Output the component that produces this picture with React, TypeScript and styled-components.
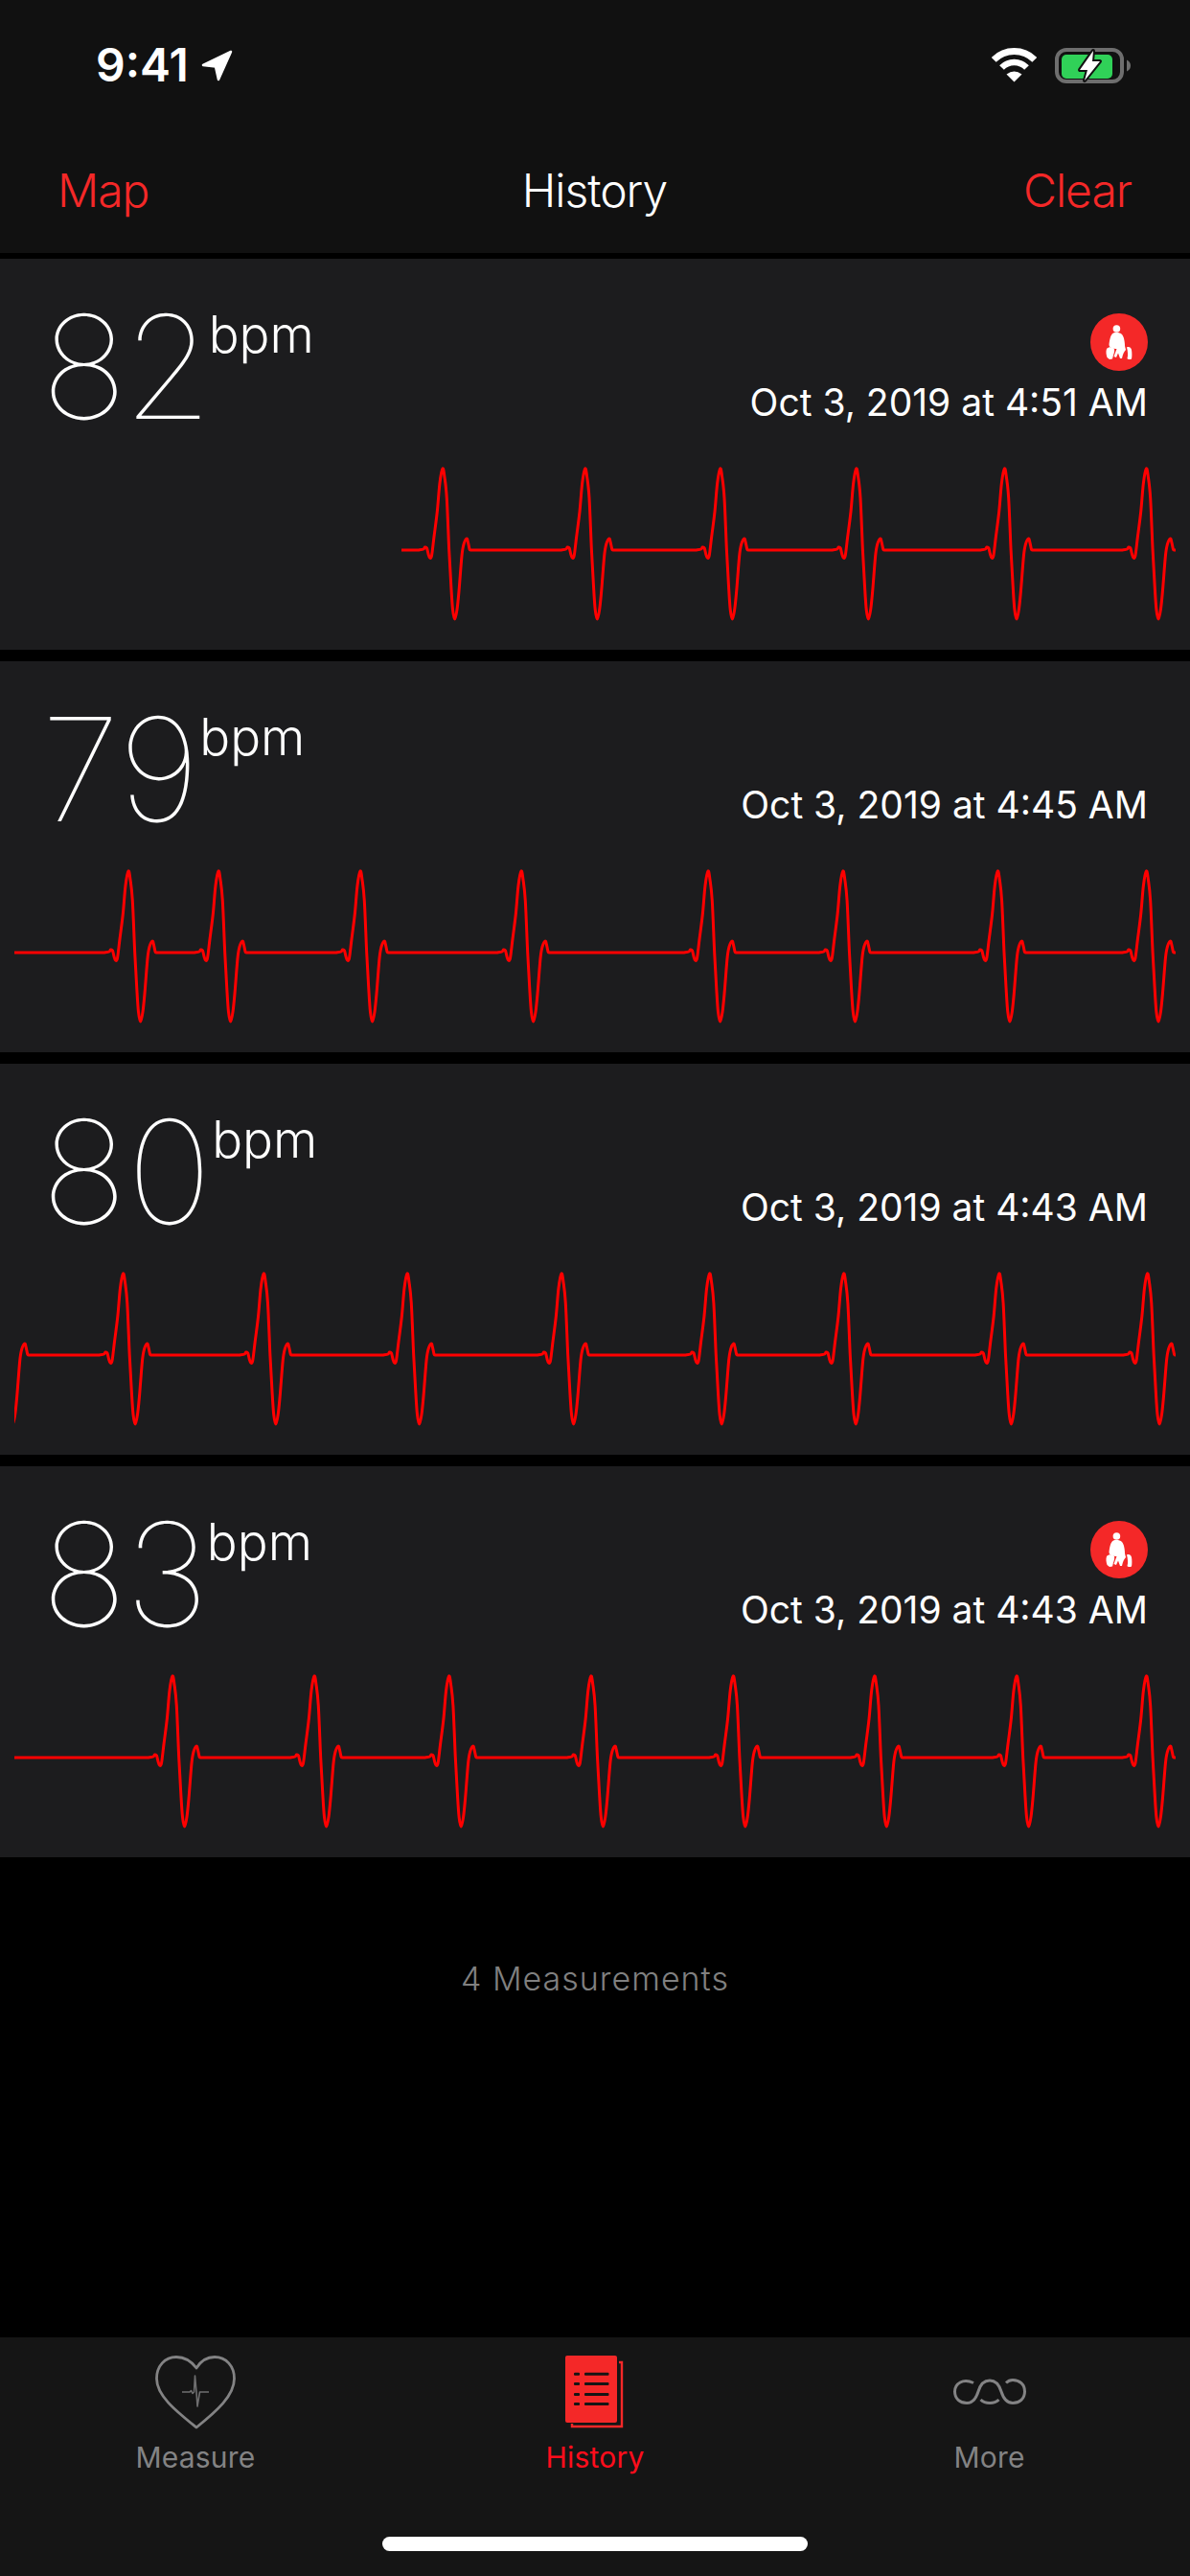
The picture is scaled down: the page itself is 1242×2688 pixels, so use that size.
import React from 'react';
import styled, { createGlobalStyle } from 'styled-components';

const Global = createGlobalStyle`
  html, body { margin: 0; padding: 0; background: #000; }
  * { box-sizing: border-box; }
`;

const FONT = `Inter, "Liberation Sans", sans-serif`;
const RED = '#f42828';
const GREY = '#838384';

const Page = styled.div`
  width: 1242px; height: 2688px; background: #000; display: flex; flex-direction: column;
  overflow: hidden; font-family: ${FONT}; color: #fff;
`;
const Header = styled.header`
  height: 264px; background: #111; margin-bottom: 6px; display: flex; flex-direction: column;
`;
const StatusBar = styled.div`
  height: 135px; padding: 49px 61px 0 100px; display: flex; justify-content: space-between; align-items: flex-start;
`;
const TimeWrap = styled.div`display: flex; align-items: center; gap: 13px; height: 38px;`;
const Time = styled.span`font-size: 48px; font-weight: 600; letter-spacing: 0; line-height: 38px;`;
const StatusIcons = styled.div`display: flex; align-items: flex-start; gap: 19px; padding-top: 1px;`;
const NavRow = styled.nav`
  display: grid; grid-template-columns: 1fr auto 1fr; align-items: center; padding: 0 61px 2px 60px; height: 128px;
  font-size: 48px; font-weight: 300; letter-spacing: -1px;
`;
const NavAction = styled.span<{ $end?: boolean }>`color: ${RED}; text-align: ${p => (p.$end ? 'right' : 'left')};`;
const NavTitle = styled.span``;

const List = styled.main`display: flex; flex-direction: column; gap: 12px;`;
const Card = styled.article`height: 408px; background: #1c1c1e; display: flex; flex-direction: column;`;
const CardTop = styled.div`
  height: 210px; display: flex; justify-content: space-between; padding: 0 44px 0 43px;
`;
const Reading = styled.div`display: flex; align-items: flex-start; padding-top: 39px;`;
const Bpm = styled.span<{ $tracking: number }>`
  font-size: 150px; font-weight: 100; line-height: 148px; letter-spacing: ${p => p.$tracking}px;
`;
const Unit = styled.span`font-size: 53px; font-weight: 300; line-height: 60px; margin-top: 10px;`;
const Meta = styled.div`
  display: flex; flex-direction: column; align-items: flex-end; padding: 57px 0 37px;
`;
const BadgeCircle = styled.div`
  width: 60px; height: 60px; border-radius: 50%; background: ${RED}; display: block;
`;
const DateText = styled.div`font-size: 39px; font-weight: 400; line-height: 46px; margin-top: auto; white-space: nowrap;`;
const Wave = styled.svg<{ $start: number }>`
  display: block; height: 175px; margin-left: ${p => p.$start}px; width: ${p => 1226.5 - p.$start}px; flex: none;
`;
const Footer = styled.div`
  height: 252px; display: flex; align-items: center; justify-content: center; font-size: 34px; font-weight: 300;
  letter-spacing: 1px; color: #808080;
`;
const TabBar = styled.footer`
  margin-top: auto; height: 249px; background: #151515; padding-top: 19px; display: flex; flex-direction: column;
`;
const Tabs = styled.div`
  display: grid; grid-template-columns: 408px 426px 397px; height: 124px;
`;
const Tab = styled.div<{ $active?: boolean }>`
  display: flex; flex-direction: column; align-items: center; height: 124px;
  color: ${p => (p.$active ? '#ff0d1c' : GREY)}; font-size: 30px; font-weight: 400;
`;
const TabIcon = styled.div`height: 91px; display: flex; align-items: flex-start; justify-content: center;`;
const MoreIconWrap = styled(TabIcon)`padding-top: 24px;`;
const TabLabel = styled.span`line-height: 36px; letter-spacing: 0.2px;`;
const Home = styled.div`
  width: 444px; height: 15px; border-radius: 8px; background: #fff; margin: 65px auto 0;
`;

const BEAT: [number, number][] = [
  [-25, 0], [-20, -1], [-18.5, -3], [-16.5, -2], [-15, 4], [-13.5, 8], [-11.5, 6], [-9, -14], [-5.7, -40], [-3, -70], [0, -85],
  [2, -76], [4.3, -54], [6.7, 0], [8.7, 36], [10.5, 62], [12.7, 72], [15, 62], [17, 43], [20, 6], [22, -6], [25, -12], [26.5, -8],
  [28, -1], [29, 0],
];
const BASE = 94;

function ecgPath(start: number, peaks: number[]) {
  let d = `M${start} ${BASE}`;
  for (const p of peaks) {
    const pts = BEAT.map(([x, y]) => [x + p, y + BASE]);
    d += ` L${pts[0][0]} ${pts[0][1]}`;
    for (let i = 0; i < pts.length - 1; i++) {
      const p0 = pts[Math.max(i - 1, 0)], p1 = pts[i], p2 = pts[i + 1], p3 = pts[Math.min(i + 2, pts.length - 1)];
      const c1 = [p1[0] + (p2[0] - p0[0]) / 6, p1[1] + (p2[1] - p0[1]) / 6];
      const c2 = [p2[0] - (p3[0] - p1[0]) / 6, p2[1] - (p3[1] - p1[1]) / 6];
      d += ` C${c1[0].toFixed(2)} ${c1[1].toFixed(2)} ${c2[0].toFixed(2)} ${c2[1].toFixed(2)} ${p2[0].toFixed(2)} ${p2[1].toFixed(2)}`;
    }
  }
  return d + ' L1240 ' + BASE;
}

const Ecg = ({ start, peaks }: { start: number; peaks: number[] }) => (
  <Wave $start={start} viewBox={`${start} 0 ${1226.5 - start} 175`}>
    <path d={ecgPath(start, peaks)} fill="none" stroke="#ff0000" strokeWidth={3} strokeLinejoin="round" />
  </Wave>
);

const Badge = () => (
  <BadgeCircle>
    <svg width="60" height="60" viewBox="0 0 60 60">
      <circle cx="27.4" cy="16" r="3.8" fill="#fff" />
      <path fill="#fff" d="M24 20.5C27 19.5 31 20 33 22C35 24 36 30 36 34L37 38L35.5 40C34 42 33.5 45 33 47L31 47L29 41.5L27 46L24.5 45L27.5 37C24 37 20 36 19.5 33C20 28 21 22 24 20.5Z" />
      <path fill="#fff" d="M17 37C19 34.5 23 34.5 25 37C25.5 40 24.5 42 24 43.5L23 47.5L20 48L17.5 46C16.5 43 16 40 17 37Z" />
      <path fill="#fff" d="M38 35.5C40 34.5 42.5 35.5 43 38C43.5 41 43.5 45 43 47.5C41 48.5 39 48 38.5 47C39.5 44 39 39 38 35.5Z" />
    </svg>
  </BadgeCircle>
);

const LocationArrow = () => (
  <svg width="33" height="33" viewBox="0 0 33 33">
    <path d="M31 2L2 16L15 17.5L18 31Z" fill="#fff" stroke="#fff" strokeWidth="2.5" strokeLinejoin="round" />
  </svg>
);
const Wifi = () => (
  <svg width="47" height="36" viewBox="0 0 47 36">
    <path d="M2.2 12.4A30 30 0 0 1 44.8 12.4" fill="none" stroke="#fff" strokeWidth="7" />
    <path d="M10.5 20.5A18 18 0 0 1 36.5 20.5" fill="none" stroke="#fff" strokeWidth="6.5" />
    <path d="M23.5 35.5L15.5 27.5Q23.5 21.5 31.5 27.5Z" fill="#fff" />
  </svg>
);
const Battery = () => (
  <svg width="80" height="38" viewBox="0 0 80 38">
    <rect x="2" y="2" width="68" height="33" rx="10" fill="none" stroke="#6e6e6e" strokeWidth="4" />
    <rect x="7" y="7" width="53" height="25" rx="5" fill="#30d158" />
    <path d="M75 12.5C78 14 79 16 79 18.5C79 21 78 23 75 24.5Z" fill="#6e6e6e" />
    <path d="M40 3L26 23H34L31 34L47 14H39Z" fill="#fff" stroke="#111" strokeWidth="4" paintOrder="stroke" strokeLinejoin="round" />
  </svg>
);

const HeartIcon = () => (
  <svg width="84" height="77" viewBox="0 0 84 77">
    <path d="M43 13C37 5 29 1.5 22 1.5C10 1.5 1.5 11 1.5 24C1.5 42 22 58 43 75C64 58 82.5 42 82.5 24C82.5 11 74 1.5 62 1.5C55 1.5 48 5 43 13Z" fill="none" stroke={GREY} strokeWidth="2.8" strokeLinejoin="round" />
    <path d="M28 38H36L37.5 36.5L39 39.5L40.5 38L41.5 21L43 38L44 53L46.5 38H56" fill="none" stroke="#6f6f70" strokeWidth="1.6" strokeLinejoin="round" />
  </svg>
);
const DocIcon = () => (
  <svg width="62" height="77" viewBox="0 0 62 77">
    <rect x="0" y="0" width="54" height="70" rx="2" fill={RED} />
    <path d="M56 7H59V74H7V71" fill="none" stroke={RED} strokeWidth="2.4" />
    {[17.7, 28, 39, 49].map(y => (
      <React.Fragment key={y}>
        <rect x="9" y={y} width="6" height="3" rx="1" fill="#151515" />
        <rect x="20" y={y} width="25.5" height="3" rx="1" fill="#151515" />
      </React.Fragment>
    ))}
  </svg>
);
const LoopsIcon = () => (
  <svg width="76" height="28" viewBox="0 0 76 28">
    <path d="M21 4.5C10 -1 1.5 5.5 1.5 13.5C1.5 21 7 25.5 14 25.5C21 25.5 24 20 26 13.5C28 6.5 31 2 38 2C45 2 48 7 50 13.5C52 20 55 25.5 62 25.5C69 25.5 74.5 21 74.5 13.5C74.5 6 69 1.5 62 1.5C59.5 1.5 57 2.5 55 4.5" fill="none" stroke={GREY} strokeWidth="3" />
    <path d="M28.5 22C31 24.5 34 25.5 38 25.5C42 25.5 45 24.5 47.5 22" fill="none" stroke={GREY} strokeWidth="3" />
  </svg>
);

const data = [
  { bpm: '82', tracking: -4, date: 'Oct 3, 2019 at 4:51 AM', badge: true, start: 419, peaks: [462, 610.7, 751.7, 893.7, 1048.4, 1196.4] },
  { bpm: '79', tracking: 0, date: 'Oct 3, 2019 at 4:45 AM', badge: false, start: 15, peaks: [134, 228, 376, 544, 739, 879.8, 1041.3, 1196.4] },
  { bpm: '80', tracking: 0, date: 'Oct 3, 2019 at 4:43 AM', badge: false, start: 15, peaks: [0.7, 128.5, 275.2, 425, 586, 740.6, 880.6, 1042.8, 1197.5] },
  { bpm: '83', tracking: -2, date: 'Oct 3, 2019 at 4:43 AM', badge: true, start: 15, peaks: [180, 328, 468.6, 616.8, 765.2, 912.7, 1061, 1196.4] },
];

export default function App() {
  return (
    <Page>
      <Global />
      <Header>
        <StatusBar>
          <TimeWrap><Time>9:41</Time><LocationArrow /></TimeWrap>
          <StatusIcons><Wifi /><Battery /></StatusIcons>
        </StatusBar>
        <NavRow>
          <NavAction>Map</NavAction>
          <NavTitle>History</NavTitle>
          <NavAction $end>Clear</NavAction>
        </NavRow>
      </Header>
      <List>
        {data.map((d, i) => (
          <Card key={i}>
            <CardTop>
              <Reading><Bpm $tracking={d.tracking}>{d.bpm}</Bpm><Unit>bpm</Unit></Reading>
              <Meta>
                {d.badge && <Badge />}
                <DateText>{d.date}</DateText>
              </Meta>
            </CardTop>
            <Ecg start={d.start} peaks={d.peaks} />
          </Card>
        ))}
      </List>
      <Footer>4 Measurements</Footer>
      <TabBar>
        <Tabs>
          <Tab><TabIcon><HeartIcon /></TabIcon><TabLabel>Measure</TabLabel></Tab>
          <Tab $active><TabIcon><DocIcon /></TabIcon><TabLabel>History</TabLabel></Tab>
          <Tab><MoreIconWrap><LoopsIcon /></MoreIconWrap><TabLabel>More</TabLabel></Tab>
        </Tabs>
        <Home />
      </TabBar>
    </Page>
  );
}
